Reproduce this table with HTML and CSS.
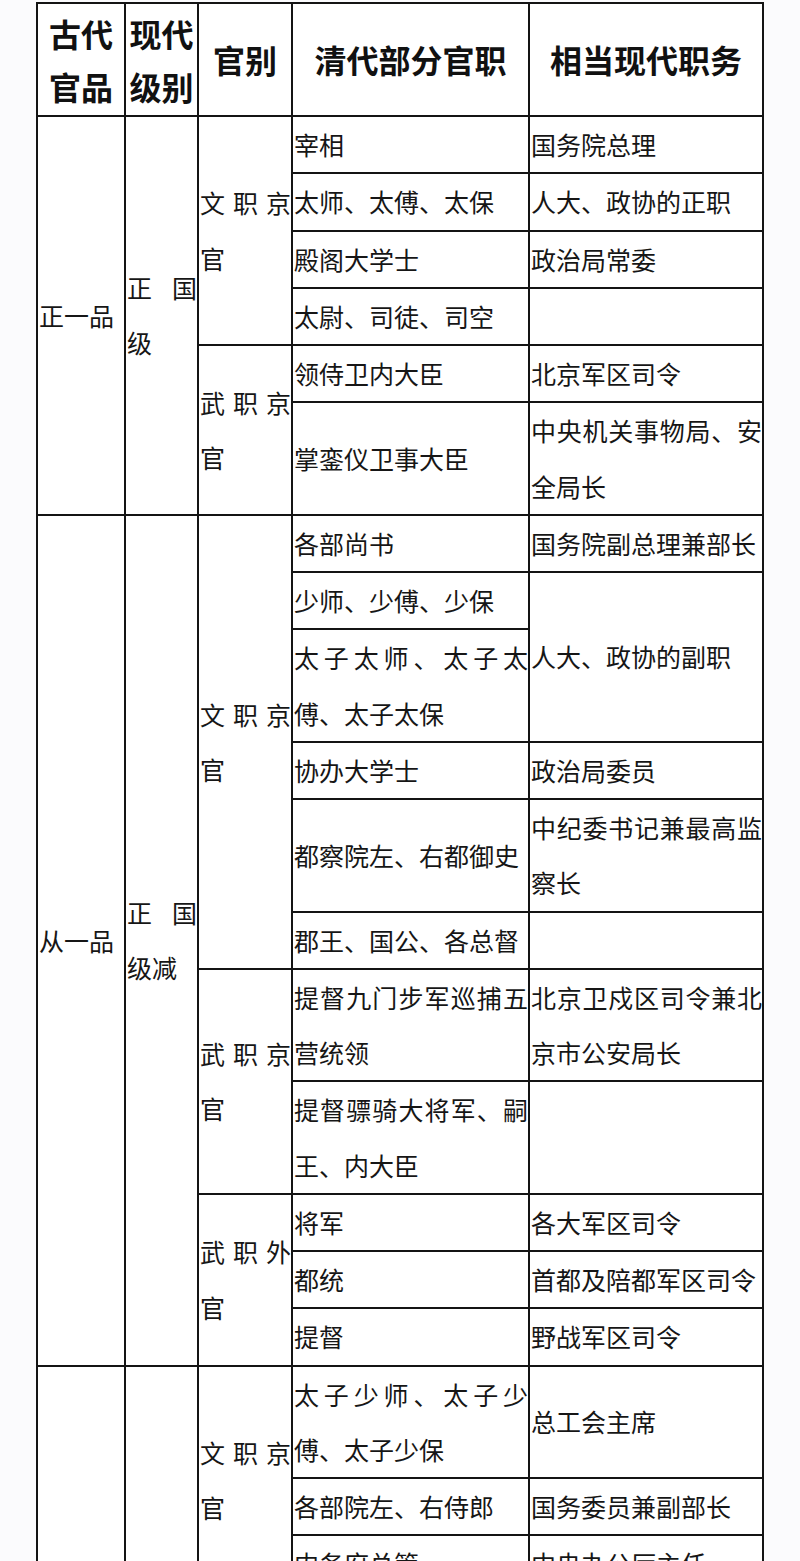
FILE: index.html
```html
<!DOCTYPE html>
<html lang="zh-CN">
<head>
<meta charset="utf-8">
<title>清代官职与现代职务对照</title>
<link rel="stylesheet" href="styles.css">
</head>
<body>
<table class="ranks">
  <colgroup>
    <col class="c-grade">
    <col class="c-level">
    <col class="c-type">
    <col class="c-post">
    <col class="c-modern">
  </colgroup>
  <thead>
    <tr>
      <th>古代<br>官品</th>
      <th>现代<br>级别</th>
      <th>官别</th>
      <th>清代部分官职</th>
      <th>相当现代职务</th>
    </tr>
  </thead>
  <tbody>
    <tr>
      <td rowspan="6">正一品</td>
      <td rowspan="6" class="just">正国级</td>
      <td rowspan="4" class="just">文职京官</td>
      <td>宰相</td>
      <td>国务院总理</td>
    </tr>
    <tr><td class="just">太师、太傅、太保</td><td class="just">人大、政协的正职</td></tr>
    <tr><td>殿阁大学士</td><td>政治局常委</td></tr>
    <tr><td class="just">太尉、司徒、司空</td><td></td></tr>
    <tr>
      <td rowspan="2" class="just">武职京官</td>
      <td>领侍卫内大臣</td>
      <td>北京军区司令</td>
    </tr>
    <tr><td>掌銮仪卫事大臣</td><td class="just">中央机关事物局、安全局长</td></tr>

    <tr>
      <td rowspan="11">从一品</td>
      <td rowspan="11" class="just">正国级减</td>
      <td rowspan="6" class="just">文职京官</td>
      <td>各部尚书</td>
      <td>国务院副总理兼部长</td>
    </tr>
    <tr><td>少师、少傅、少保</td><td rowspan="2">人大、政协的副职</td></tr>
    <tr><td class="just">太子太师、太子太傅、太子太保</td></tr>
    <tr><td>协办大学士</td><td>政治局委员</td></tr>
    <tr><td>都察院左、右都御史</td><td class="just">中纪委书记兼最高监察长</td></tr>
    <tr><td>郡王、国公、各总督</td><td></td></tr>
    <tr>
      <td rowspan="2" class="just">武职京官</td>
      <td class="just">提督九门步军巡捕五营统领</td>
      <td class="just">北京卫戍区司令兼北京市公安局长</td>
    </tr>
    <tr><td class="just">提督骠骑大将军、嗣王、内大臣</td><td></td></tr>
    <tr>
      <td rowspan="3" class="just">武职外官</td>
      <td>将军</td>
      <td>各大军区司令</td>
    </tr>
    <tr><td>都统</td><td>首都及陪都军区司令</td></tr>
    <tr><td>提督</td><td>野战军区司令</td></tr>

    <tr>
      <td rowspan="4"></td>
      <td rowspan="4"></td>
      <td rowspan="4" class="just">文职京官</td>
      <td class="just">太子少师、太子少傅、太子少保</td>
      <td>总工会主席</td>
    </tr>
    <tr><td>各部院左、右侍郎</td><td>国务委员兼副部长</td></tr>
    <tr><td>内务府总管</td><td>中央办公厅主任</td></tr>
    <tr><td></td><td></td></tr>
  </tbody>
</table>
</body>
</html>
```

FILE: styles.css
```css
html, body {
  margin: 0;
  padding: 0;
  background: #fbfbfd;
}

body {
  font-family: "Noto Sans CJK SC", "Noto Sans", sans-serif;
  color: #161616;
}

.ranks {
  border-collapse: collapse;
  table-layout: fixed;
  width: 726px;
  margin: 2px 0 0 36px;
  background: #ffffff;
}

.c-grade { width: 88px; }
.c-level { width: 73px; }
.c-type { width: 94px; }
.c-post { width: 237px; }
.c-modern { width: 234px; }

.ranks th,
.ranks td {
  border: 2px solid #141414;
  vertical-align: middle;
}

.ranks th {
  font-size: 32px;
  font-weight: 700;
  line-height: 53px;
  padding: 2.5px 0;
  text-align: center;
  color: #111;
}

.ranks td {
  font-size: 25px;
  font-weight: 400;
  line-height: 55.25px;
  padding: 0 0 0 1px;
  text-align: left;
  word-break: normal;
  line-break: strict;
}

.ranks td.just {
  text-align: justify;
  text-justify: inter-character;
}
```
